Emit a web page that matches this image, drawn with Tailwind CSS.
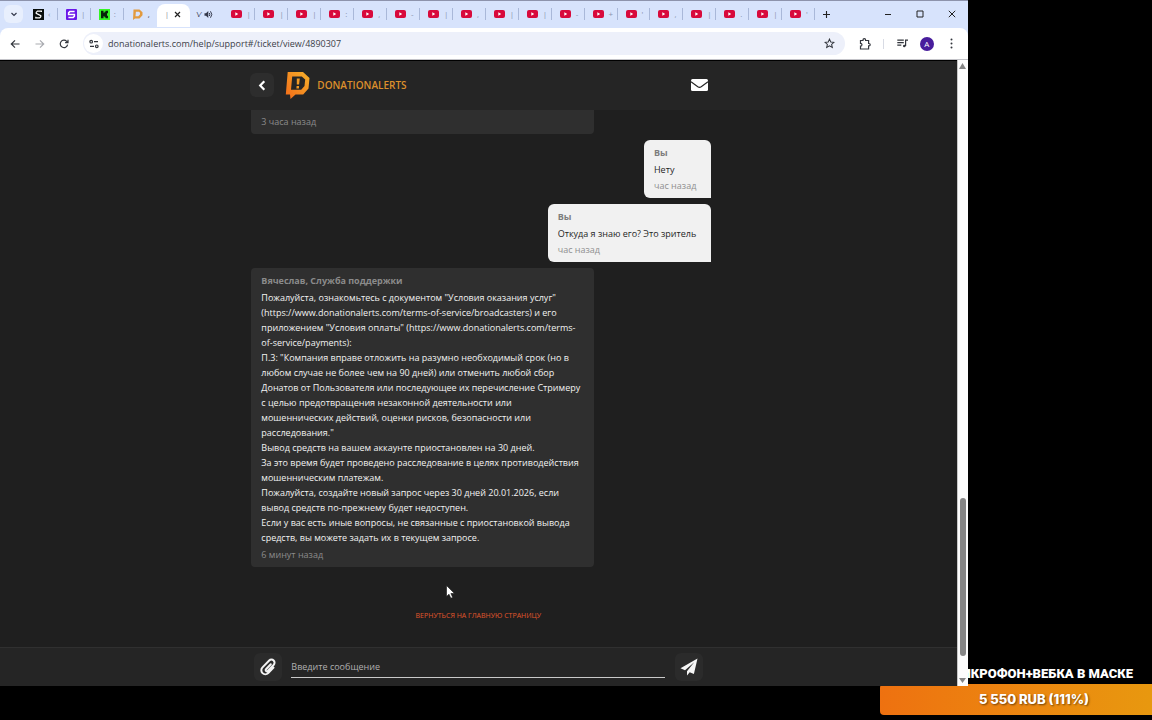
<!DOCTYPE html>
<html lang="ru">

<head>
    <meta charset="UTF-8">
    <meta name="viewport" content="width=device-width, initial-scale=1.0">
    <title>DonationAlerts</title>
    <script src="https://cdn.jsdelivr.net/npm/@tailwindcss/browser@4"></script>
</head>

<body class="relative h-screen overflow-hidden bg-black font-['Open_Sans','Noto_Sans',sans-serif]">

    <!-- browser window -->
    <div class="relative z-10 flex h-[calc(100vh-34px)] w-[84%] flex-col bg-white">

        <div class="flex h-7 shrink-0 items-center border-t border-[#8d93ac] bg-[#d7e3fc] pb-px text-[#33384a]">
            <button aria-label="Поиск вкладок" class="ml-1 flex h-[18px] w-[19px] items-center justify-center rounded-md bg-[#e8effd]">
                <svg class="size-2" viewBox="0 0 8 8" fill="none" stroke="currentColor" stroke-width="1.2"><path d="M1.5 3 4 5.5 6.5 3" /></svg>
            </button>
            <div id="tabs" class="ml-[2px] grid h-full w-[790px] shrink-0 auto-cols-fr grid-flow-col">
                <div class="flex min-w-0 items-center pl-2 text-[8px]">
                    <svg class="size-[11px]" viewBox="0 0 11 11"><rect width="11" height="11" fill="#080d0c" /><path d="M8.4 3V2.200H4.400L3.200 3.400V4.300L7.800 6.700V7.700L6.700 8.800H2.800V7.800" fill="none" stroke="#fff" stroke-width="1.2" /></svg>
                    <span class="ml-1 text-[#8a94ae]">‹</span>
                    <i class="ml-auto h-3 w-px bg-[#a9b8d9]"></i>
                </div>
                <div class="flex min-w-0 items-center pl-2 text-[8px]">
                    <svg class="size-[11px]" viewBox="0 0 11 11"><rect width="11" height="11" rx="1" fill="#6a16e8" /><path d="M8.6 2.6H3.8L2.6 3.8v1.6h5.8v1.8L7.2 8.4H2.4" fill="none" stroke="#fff" stroke-width="1.5" /></svg>
                    <span class="ml-1 text-[#8a94ae]">|</span>
                    <i class="ml-auto h-3 w-px bg-[#a9b8d9]"></i>
                </div>
                <div class="flex min-w-0 items-center pl-2 text-[8px]">
                    <svg class="size-[11px]" viewBox="0 0 11 11"><rect width="11" height="11" fill="#35f524" /><path d="M2 1.8h2.5v2h1v-1h1v-1H9v2.4H8v2.5h1v2.5H6.500v-1h-1v-1h-1v2H2z" fill="#06230a" /></svg>
                    <span class="ml-1 text-[#8a94ae]">:</span>
                    <i class="ml-auto h-3 w-px bg-[#a9b8d9]"></i>
                </div>
                <div class="flex min-w-0 items-center pl-2 text-[8px]">
                    <svg class="size-[11px]" viewBox="0 0 11 11"><path d="M1.500.500H7.500L10.500 3.200V6.200L7.500 9.500H3L1 11zM3.900 2.800 3.500 7.200H6.300L8 5.500V3.800L7 2.800z" fill="#e29a3f" fill-rule="evenodd" /></svg>
                    <span class="ml-[5px]">,</span>
                </div>
                <div class="mt-[3px] flex min-w-0 items-center rounded-t-lg bg-white pb-[3px] pl-2 text-[8px]">
                    <span class="text-[#8d8d98]">|</span>
                    <button aria-label="Закрыть вкладку" class="ml-[5px]">
                        <svg class="size-[7px]" viewBox="0 0 7 7" stroke="#222" stroke-width="1.2"><path d="m1 1 5 5m0-5-5 5" /></svg>
                    </button>
                </div>
                <div class="flex min-w-0 items-center pl-[7px] text-[8px]">
                    <span>\⁄</span>
                    <svg class="ml-[3px] size-[9px]" viewBox="0 0 9 9" fill="none" stroke="currentColor"><path d="M.5 3.200H2L4.300 1v7L2 5.800H.5z" fill="currentColor" stroke="none" /><path d="M5.300 3q1 1.500 0 3M6.500 1.300q2.600 3.200 0 6.400" /></svg>
                </div>
            </div>
            <button aria-label="Новая вкладка" class="ml-[7px]">
                <svg class="size-[9px]" viewBox="0 0 9 9" stroke="#222" stroke-width="1.100"><path d="M4.500 1v7M1 4.500h7" /></svg>
            </button>
            <div class="mr-3 ml-auto flex gap-6 text-[#222]">
                <button aria-label="Свернуть"><svg class="size-2" viewBox="0 0 8 8" fill="none" stroke="currentColor"><path d="M1 4.500h6" /></svg></button>
                <button aria-label="Развернуть"><svg class="size-2" viewBox="0 0 8 8" fill="none" stroke="currentColor"><path d="M1 1h6v6H1z" /></svg></button>
                <button aria-label="Закрыть"><svg class="size-2" viewBox="0 0 8 8" fill="none" stroke="currentColor"><path d="m.8.8 6.400 6.400m0-6.400L.8 7.200" /></svg></button>
            </div>
        </div>

        <div class="shrink-0 bg-[#d7e3fc]">
            <div class="flex h-8 items-center rounded-t-lg border-b border-[#c3c3c8] bg-white pr-[15px] pl-[10px] text-[#33363d]">
                <button aria-label="Назад"><svg class="size-[10px]" viewBox="0 0 10 10" fill="none" stroke="currentColor" stroke-width="1.2"><path d="M9.500 5H1.500M5 1.300 1.300 5 5 8.700" /></svg></button>
                <button aria-label="Вперёд" class="ml-[15px] text-[#a9abb0]"><svg class="size-[10px]" viewBox="0 0 10 10" fill="none" stroke="currentColor" stroke-width="1.200"><path d="M.5 5h8M5 1.300 8.700 5 5 8.700" /></svg></button>
                <button aria-label="Обновить" class="ml-[14px]"><svg class="size-[10px]" viewBox="0 0 10 10" fill="none" stroke="currentColor" stroke-width="1.200"><path d="M8.600 5.600A3.700 3.700 0 1 1 7.700 2.400L8.700 3.400M9 .8v2.900H6.100" /></svg></button>
                <div class="ml-[14px] flex h-[23px] flex-1 items-center rounded-full bg-[#edf0fa] pr-[10px] pl-px">
                    <button aria-label="Сведения о сайте" class="flex size-[19px] items-center justify-center rounded-full bg-white">
                        <svg class="size-[10px]" viewBox="0 0 10 10" fill="none" stroke="currentColor" stroke-width="1.200"><circle cx="2.200" cy="2.700" r="1.300" /><path d="M5 2.700h4M1 7.300h4" /><circle cx="7.800" cy="7.300" r="1.300" /></svg>
                    </button>
                    <input aria-label="Адрес" type="text" value="donationalerts.com/help/support#/ticket/view/4890307" class="ml-[5px] flex-1 bg-transparent text-[9px] text-[#3c4048] outline-none">
                    <button aria-label="В закладки"><svg class="size-[11px]" viewBox="0 0 12 12" fill="none" stroke="currentColor" stroke-width="1.100"><path d="m6 1.200 1.400 3.200 3.500.3-2.600 2.300.8 3.400L6 8.600l-3.100 1.800.8-3.400L1.100 4.700l3.500-.3z" /></svg></button>
                </div>
                <button aria-label="Расширения" class="ml-[14px]"><svg class="size-3" viewBox="0 0 12 12" fill="none" stroke="currentColor" stroke-width="1.200"><path d="M1.500 2.500H4V2a1.300 1.300 0 0 1 2.600 0v.5h3v3h.4a1.200 1.200 0 0 1 0 2.400h-.4v3.100H1.500V8.200a1.300 1.300 0 0 0 0-2.900z" /></svg></button>
                <i class="ml-3 h-[10px] w-px bg-[#d8dbe4]"></i>
                <button aria-label="Медиа" class="ml-[13px]"><svg class="size-[11px]" viewBox="0 0 11 11" fill="none" stroke="currentColor" stroke-width="1.200"><path d="M.3 2.200h6.500M.3 4.700h6.500M.3 7.200h4M8.600 8V2.200H11" /><circle cx="7.300" cy="8" r="1.300" fill="currentColor" stroke="none" /></svg></button>
                <button aria-label="Профиль" class="ml-3 size-[14px] rounded-full bg-[#481d9c] text-center text-[8px] leading-[14px] text-white">A</button>
                <button aria-label="Меню" class="ml-[16px]"><svg class="h-[11px] w-[3px]" viewBox="0 0 3 11" fill="currentColor"><circle cx="1.500" cy="1.500" r="1" /><circle cx="1.500" cy="5.500" r="1" /><circle cx="1.500" cy="9.500" r="1" /></svg></button>
            </div>
        </div>

        <div class="flex min-h-0 flex-1">
            <div class="flex min-w-0 flex-1 flex-col bg-[#1f1f1f] text-[9px]">

                <header class="h-[50px] shrink-0 border-t border-black bg-[#252525] pb-px">
                    <div class="mx-auto flex h-full w-[466px] items-center pr-[3px] pl-[5px]">
                        <button aria-label="Назад к списку" class="flex size-6 items-center justify-center rounded-md bg-[#2d2d2d]">
                            <svg class="h-[11px] w-2" viewBox="0 0 8 11" fill="none" stroke="#fff" stroke-width="2.200"><path d="M6.300 1.200 2.200 5.500l4.100 4.300" /></svg>
                        </button>
                        <a href="#" class="ml-[11px] flex items-center gap-[7px]">
                            <svg class="h-7 w-[25px]" viewBox="0 0 25 28">
                                <defs><linearGradient id="brand" x1="0" y1="1" x2="1" y2="0"><stop stop-color="#f36a18" /><stop offset="1" stop-color="#f5b12b" /></linearGradient></defs>
                                <path d="M2.700 1H18L24.500 7 23.500 17.500 18.200 23.500H10.500L5.500 28 5 23.500H.8zM7.200 5.600 6 18.700H16.200L19.500 15 20.200 8.600 16.800 5.600z" fill="url(#brand)" fill-rule="evenodd" />
                                <path d="M11.800 7.500h3l-.7 6h-2.300zM11.600 15h2.500l-.2 2.400h-2.500z" fill="#f29a25" />
                            </svg>
                            <span class="text-[10px] font-semibold text-[#dc8f2c]">DONATIONALERTS</span>
                        </a>
                        <button aria-label="Сообщения" class="ml-auto">
                            <svg class="h-3 w-[17px]" viewBox="0 0 17 12"><rect width="17" height="12" rx="1.500" fill="#fff" /><path d="M0 2.700 6.800 7.800Q8.500 9 10.200 7.800L17 2.700" fill="none" stroke="#252525" stroke-width="1.100" /></svg>
                        </button>
                    </div>
                </header>

                <main class="flex min-h-0 flex-1 flex-col justify-end overflow-hidden">
                    <div class="mx-auto flex w-[466px] flex-col items-start gap-[6px] pl-[6px] leading-[15px]">
                        <article class="w-[343px] rounded bg-[#2f2f2f] px-[10px] pt-5 pb-1 text-[#8b8b8b]">
                            <time class="block leading-4">3 часа назад</time>
                        </article>
                        <article class="self-end rounded-md rounded-br-none bg-[#f1f1f1] pt-[5px] pr-[15px] pb-1 pl-[10px] text-[#1f1f1f]">
                            <h2 class="leading-4 font-bold text-[#7d7d7d]">Вы</h2>
                            <p class="mt-px">Нету</p>
                            <time class="mt-px block leading-4 text-[#8f8f8f]">час назад</time>
                        </article>
                        <article class="self-end rounded-md rounded-br-none bg-[#f1f1f1] pt-[5px] pr-[15px] pb-1 pl-[10px] text-[#1f1f1f]">
                            <h2 class="leading-4 font-bold text-[#7d7d7d]">Вы</h2>
                            <p class="mt-px">Откуда я знаю его? Это зритель</p>
                            <time class="mt-px block leading-4 text-[#8f8f8f]">час назад</time>
                        </article>
                        <article class="w-[343px] rounded bg-[#2f2f2f] px-[10px] pt-[5px] pb-1 text-[#f2f2f2]">
                            <h2 class="leading-4 font-bold text-[#8b8b8b]">Вячеслав, Служба поддержки</h2>
                            <p class="mt-px whitespace-nowrap">
                                Пожалуйста, ознакомьтесь с документом "Условия оказания услуг"<br>
                                (https://www.donationalerts.com/terms-of-service/broadcasters) и его<br>
                                приложением "Условия оплаты" (https://www.donationalerts.com/terms-<br>
                                of-service/payments):<br>
                                П.3: "Компания вправе отложить на разумно необходимый срок (но в<br>
                                любом случае не более чем на 90 дней) или отменить любой сбор<br>
                                Донатов от Пользователя или последующее их перечисление Стримеру<br>
                                с целью предотвращения незаконной деятельности или<br>
                                мошеннических действий, оценки рисков, безопасности или<br>
                                расследования."<br>
                                Вывод средств на вашем аккаунте приостановлен на 30 дней.<br>
                                За это время будет проведено расследование в целях противодействия<br>
                                мошенническим платежам.<br>
                                Пожалуйста, создайте новый запрос через 30 дней 20.01.2026, если<br>
                                вывод средств по-прежнему будет недоступен.<br>
                                Если у вас есть иные вопросы, не связанные с приостановкой вывода<br>
                                средств, вы можете задать их в текущем запросе.
                            </p>
                            <time class="mt-[2px] block leading-4 text-[#8b8b8b]">6 минут назад</time>
                        </article>
                    </div>
                    <a href="#" class="mx-auto mt-[41px] mb-[23px] text-[7px] leading-4 text-[#e0562c] uppercase">Вернуться на главную страницу</a>
                </main>

                <footer class="h-[39px] shrink-0 border-t border-[#303030] bg-[#252525]">
                    <form class="mx-auto flex h-full w-[450px] items-center">
                        <button type="button" aria-label="Прикрепить файл" class="ml-px flex size-7 items-center justify-center rounded-md bg-[#2b2b2b]">
                            <svg class="size-[18px]" viewBox="0 0 18 18" fill="none" stroke="#f3f3f3" stroke-width="2" stroke-linecap="round"><path d="M11.800 6.300 7 11.300a1.200 1.200 0 0 0 1.800 1.700l5.800-6A3.100 3.100 0 0 0 10.200 2.500L3.500 9.400a4 4 0 0 0 5.700 5.700l5.300-5.500" /></svg>
                        </button>
                        <input aria-label="Введите сообщение" placeholder="Введите сообщение" class="ml-[9px] h-[22px] min-w-0 flex-1 border-b border-[#c9c9c9] bg-transparent text-[9px] text-white outline-none placeholder:text-[#b0b0b0]">
                        <button aria-label="Отправить" class="ml-[10px] flex size-7 items-center justify-center rounded-md bg-[#2b2b2b]">
                            <svg class="size-[18px]" viewBox="0 0 18 18" fill="#f5f5f5"><path d="M17.500.5.500 10.200 5 12.200 14.200 4.200 7 13.200v4.300l2.700-3.300 4.200 1.800z" /></svg>
                        </button>
                    </form>
                </footer>
            </div>

            <!-- scrollbar -->
            <div class="flex w-[11px] shrink-0 flex-col items-center border-l border-[#c6c6c6] bg-[#fcfcfc] py-[3px]">
                <svg class="h-[6px] w-[7px] shrink-0" viewBox="0 0 7 6" fill="#858585"><path d="M3.500 0 7 6H0z" /></svg>
                <div class="flex min-h-0 w-[6px] flex-1 flex-col justify-end pb-[22px]">
                    <div class="h-[27%] rounded-full bg-[#858585]"></div>
                </div>
                <svg class="h-[5px] w-[7px] shrink-0" viewBox="0 0 7 5" fill="#858585"><path d="M0 0h7L3.500 5z" /></svg>
            </div>
        </div>
    </div>

    <!-- stream goal widget, lies behind the window -->
    <section class="absolute right-0 bottom-[5px] w-[272px] font-extrabold text-white">
        <h2 class="pr-[19px] text-right font-[Roboto,sans-serif] text-[13px] leading-5 font-black whitespace-nowrap">МИКРОФОН+ВЕБКА В МАСКЕ</h2>
        <div class="h-[31px] rounded-l bg-linear-to-r from-[#ee7110] to-[#e8980f] pl-[36px] text-center font-[Inter,sans-serif] text-[13px] leading-[31px] text-shadow-[1px_1px_2px_#0008]">5 550 RUB (111%)</div>
    </section>

    <!-- cursor -->
    <svg class="absolute top-[585px] left-[446px] z-20 h-[14px] w-[9px]" viewBox="0 0 9 14"><path d="M.5.500v11l2.500-2.300 1.800 4 1.900-.8-1.800-3.900h3.600z" fill="#fff" stroke="#111" stroke-width=".6" /></svg>

    <script>
        const titles = ['|', '|', '|', ':', ',', '-', '|', ',', '|', '|', '-', '+', "'", ',', '|', '.', '|', "'"];
        const tabs = document.getElementById('tabs');

        titles.forEach(title => {
            const tab = document.createElement('div');
            tab.className = 'flex min-w-0 items-center pl-2 text-[8px]';
            tab.innerHTML = `<svg class="h-2 w-[11px]" viewBox="0 0 11 8"><rect width="11" height="8" rx="2" fill="#d80a3c" /><path d="M4.300 2.300v3.400L7.200 4z" fill="#fff" /></svg>
                <span class="ml-[5px] text-[#8a94ae]">${title}</span>
                <i class="ml-auto h-3 w-px bg-[#a9b8d9]"></i>`;
            tabs.appendChild(tab);
        });
    </script>
</body>

</html>
